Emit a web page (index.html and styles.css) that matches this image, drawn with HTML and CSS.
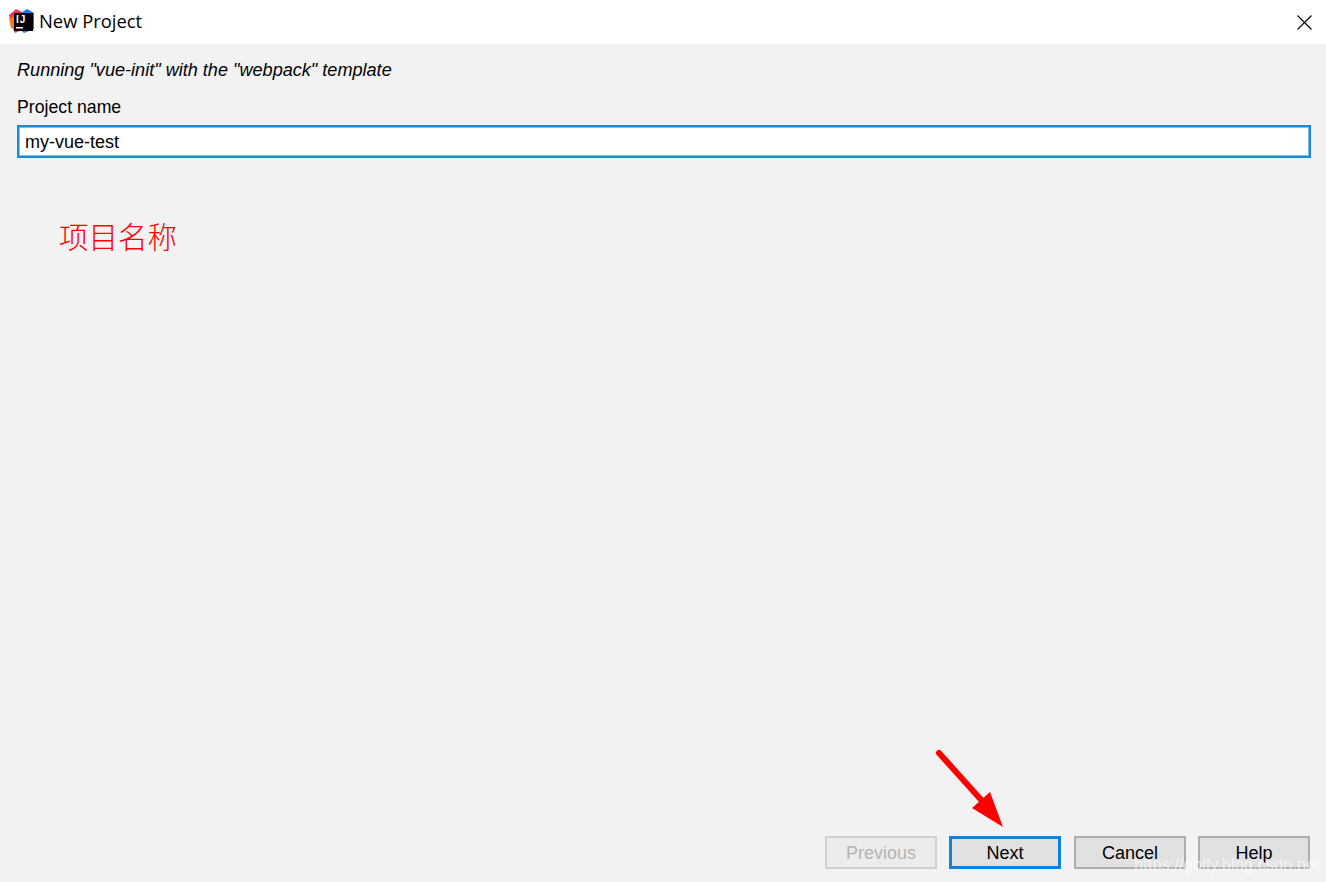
FILE: index.html
```html
<!DOCTYPE html>
<html lang="en">
<head>
<meta charset="utf-8">
<title>New Project</title>
<link rel="stylesheet" href="styles.css">
</head>
<body>
<div class="dialog">
  <header class="titlebar">
    <svg class="logo" width="25" height="25" viewBox="0 0 25 25">
      <path d="M0 6 L7 0 L15 4 L14 20 L6 24 L3 18 Z" fill="#fe315d"/>
      <path d="M0 9 L5 8 L5 20 L2 19 Z" fill="#f97a12"/>
      <path d="M12 4 L18 0 L25 4 L25 20 L15 24 L10 20 Z" fill="#087cfa"/>
      <rect x="5" y="4" width="19" height="18" fill="#000"/>
      <text class="logo-text" x="7" y="14">IJ</text>
      <rect x="7" y="18" width="7" height="1.500" fill="#fff"/>
    </svg>
    <span class="title">New Project</span>
    <svg class="close" width="15" height="15" viewBox="0 0 15 15">
      <path d="M0.500 0.500 L14.500 14.500 M14.500 0.500 L0.500 14.500" stroke="#000" stroke-width="1.100" fill="none"/>
    </svg>
  </header>
  <main class="content">
    <p class="hint">Running "vue-init" with the "webpack" template</p>
    <label class="label" for="name">Project name</label>
    <input class="field" id="name" type="text" value="my-vue-test">
    <div class="spacer"></div>
    <footer class="actions">
      <button class="btn btn-disabled" type="button">Previous</button>
      <button class="btn btn-primary" type="button">Next</button>
      <button class="btn" type="button">Cancel</button>
      <button class="btn" type="button">Help</button>
    </footer>
  </main>
  <div class="note">项目名称</div>
  <svg class="arrow" width="72" height="84" viewBox="0 0 72 84">
    <path d="M3 5 L48 55" stroke="#f00" stroke-width="6" stroke-linecap="round" fill="none"/>
    <path d="M67 79 L36 60 L54 44 Z" fill="#f00"/>
  </svg>
  <div class="watermark">https://gblfy.blog.csdn.net</div>
</div>
</body>
</html>
```
FILE: styles.css
```css
* { box-sizing: border-box; }
html, body { margin: 0; height: 100%; }
body { font-family: "Liberation Sans", Arial, sans-serif; color: #000; background: #f2f2f2; overflow: hidden; }
.dialog { position: relative; height: 882px; display: flex; flex-direction: column; }
.titlebar { height: 44px; background: #fff; display: flex; align-items: center; padding: 0 14px 2px 9px; flex: none; }
.logo { flex: none; margin-right: 5px; }
.logo-text { font-family: "Liberation Sans", sans-serif; font-weight: 700; font-size: 10px; letter-spacing: 1px; fill: #fff; }
.title { font-family: "Open Sans", sans-serif; font-size: 18.400px; flex: 1; padding-bottom: 2px; }
.close { flex: none; margin-top: 2px; }
.content { flex: 1; display: flex; flex-direction: column; padding: 16px 15px 13px 17px; }
.hint { margin: 0; font-size: 18.100px; font-style: italic; line-height: 20px; }
.label { margin-top: 17px; font-size: 17.700px; line-height: 20px; }
.field { margin-top: 8px; height: 33px; width: 100%; border: 2px solid #1e88d8; outline: 1px solid #7cc0f0; outline-offset: -3px; padding: 2px 6px 0; background: #fff; font: 18px "Liberation Sans", sans-serif; color: #000; }
.spacer { flex: 1; }
.actions { display: flex; justify-content: flex-end; gap: 12px; padding-right: 1px; }
.btn { width: 112px; height: 33px; border: 2px solid #adadad; background: #e1e1e1; font: 18px "Liberation Sans", sans-serif; color: #000; padding: 2px 0 0; }
.btn-disabled { border-color: #d0d0d0; background: #ececec; color: #b4b4b4; }
.btn-primary { border: 3px solid #0a84e0; margin-right: 1px; }
.note { position: absolute; left: 59px; top: 217px; font-family: "Noto Sans CJK SC", sans-serif; font-size: 29.500px; line-height: 36px; color: #f00; font-weight: 300; }
.arrow { position: absolute; left: 936px; top: 748px; }
.watermark { position: absolute; right: 6px; top: 854px; font-size: 16.500px; line-height: 20px; color: rgba(255, 255, 255, 0.62); }
```
